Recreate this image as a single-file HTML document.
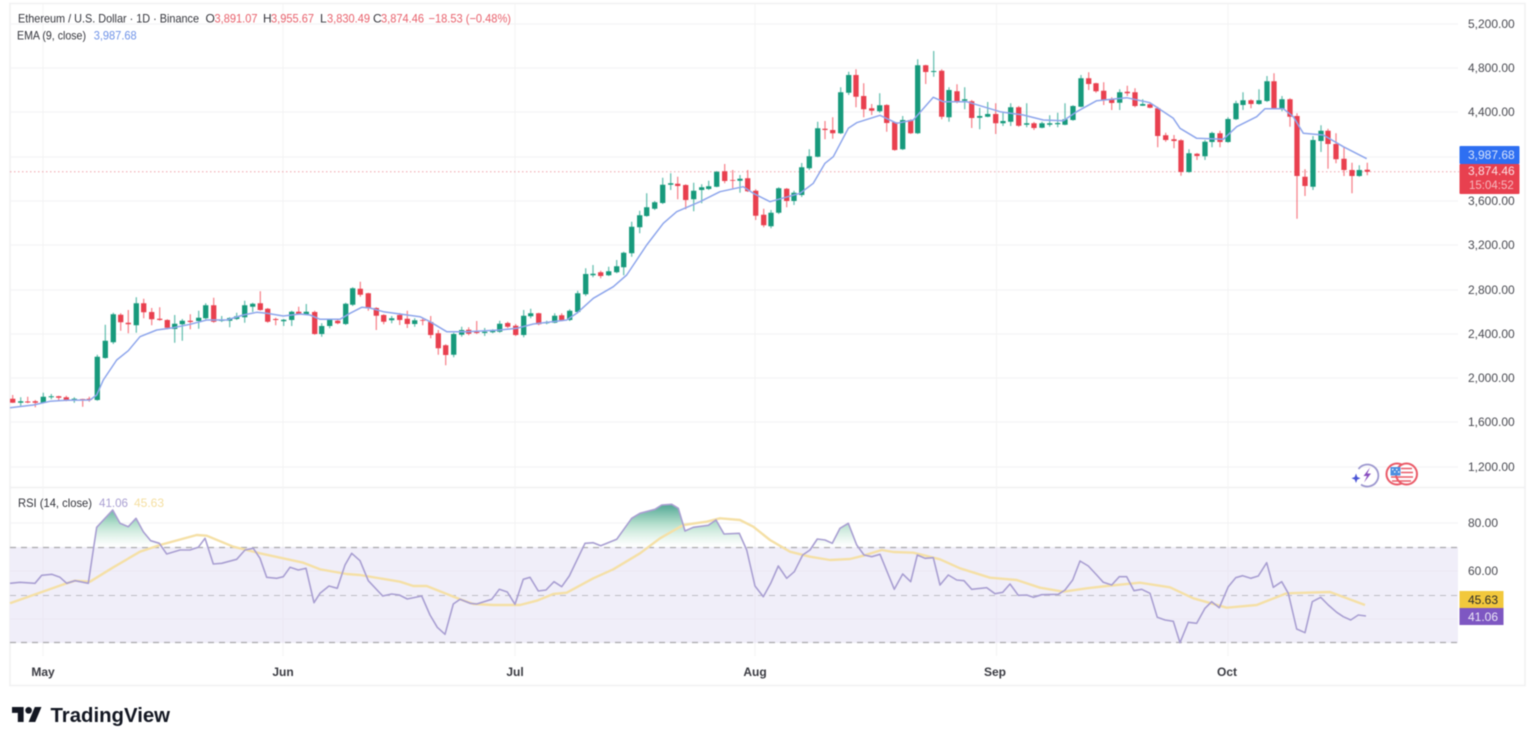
<!DOCTYPE html>
<html lang="en">
<head>
<meta charset="utf-8">
<title>ETH/USD chart</title>
<style>
html,body{margin:0;padding:0;background:#fff;width:1534px;height:744px;overflow:hidden}
svg{display:block;filter:blur(.4px);font-family:"Liberation Sans",sans-serif}
</style>
</head>
<body>
<svg width="1534" height="744" viewBox="0 0 1534 744" xmlns="http://www.w3.org/2000/svg">
<defs>
<linearGradient id="ob" gradientUnits="userSpaceOnUse" x1="0" y1="505" x2="0" y2="547">
<stop offset="0" stop-color="#55a997"/>
<stop offset=".45" stop-color="#b5e0cd"/>
<stop offset="1" stop-color="#ffffff" stop-opacity=".6"/>
</linearGradient>
</defs>
<rect width="1534" height="744" fill="#fff"/>
<!-- frame -->
<path d="M10 3.5H1525V685.5H10Z" fill="none" stroke="#f1f1f2" stroke-width="1.6"/>
<path d="M10 487.5H1525" stroke="#f0f0f1" stroke-width="1.4"/>
<!-- grid -->
<path d="M10 24H1458M10 68H1458M10 112H1458M10 157H1458M10 201H1458M10 245H1458M10 290H1458M10 334H1458M10 378H1458M10 422H1458M10 467H1458M10 523H1458" stroke="#f4f4f5" stroke-width="1.2" fill="none"/>
<path d="M43 4V656M283 4V656M515 4V656M755 4V656M996.500 4V656M1228 4V656" stroke="#f4f4f5" stroke-width="1.2" fill="none"/>
<!-- RSI band -->
<rect x="10" y="547" width="1448" height="96" fill="#f0eef9"/>
<path d="M10 571H1458M10 619H1458" stroke="#ebe8f4" stroke-width="1"/>
<path d="M43 547V643M283 547V643M515 547V643M755 547V643M996.500 547V643M1228 547V643" stroke="#ebe8f4" stroke-width="1"/>
<path d="M10 547.500H1458M10 642.500H1458" stroke="#a9a9ac" stroke-width="1.3" stroke-dasharray="6 5" fill="none"/>
<path d="M10 595.500H1458" stroke="#bdbcc4" stroke-width="1" stroke-dasharray="6 5" fill="none"/>
<!-- overbought fills -->
<path fill="url(#ob)" d="M94 547L96.700 527.300L112.700 510L120 523.300L128.300 526.700L136 518.300L143.300 531.700L150.700 540.700L159.300 543.300L161.500 547Z"/>
<path fill="url(#ob)" d="M583 547L585 543.300L593.300 542.700L600.700 545.700L616.700 539.300L631.700 518.300L640 513.300L655 509.300L661.700 505L671.700 504.300L678.300 508.300L685 531L693.300 527.300L708.300 525.300L716 520L724 534L739.300 533.300L745.400 547Z"/>
<path fill="url(#ob)" d="M808.700 547L810 550L817.300 539L825 540L832.300 543.300L840 528.300L848.300 523.300L856.700 545L857.500 547Z"/>
<!-- last price dotted line -->
<path d="M10 171.700H1459" stroke="#f0a2a9" stroke-width="1" stroke-dasharray="1.500 2.500" fill="none"/>
<!-- wicks -->
<g fill="none" stroke-width="1.300" stroke-opacity=".6">
<path stroke="#089981" d="M20.700 397.300V406.700M43.300 392.700V403.300M51.300 394V399.300M74.300 397.300V402.700M97.300 354.700V400.700M105.300 324.700V358.700M113.300 312.700V344M136.300 297.300V332.700M174.700 315V342.700M182.300 319V340.700M198.700 310.700V328.700M205.700 303.300V319.300M221.700 316V322M229.700 317.300V327.300M236.700 312.700V320M244.700 300.700V322.700M252.700 302.700V312M283.700 319V326M291.700 310.700V326M306.300 304V315M321.700 323.300V336.700M329.700 318.700V328.300M345.700 302.700V325M352.700 287.300V306M391.700 316V323.300M414.700 318.300V326.700M453.700 332.700V357.300M461.700 326.700V336.700M484.700 328V336M492.700 329.300V333.300M499.700 320.700V332.700M523.700 310V337.300M530.700 308.700V318.300M546.700 320.700V324.300M554.700 313.300V323.300M569.700 309.300V321M577.700 290.700V313.300M585.700 268.300V296M593 265V277.300M608.700 266.700V276M616.700 260V273.300M623.700 251.700V275.300M631.700 221.700V256.700M639.700 210.700V233.300M646.700 193.300V216.700M654.700 201V210M662.700 177.700V204M670.700 173.300V190M693.700 182.700V211.300M701.700 184.300V203.300M708.700 180.700V190M716.700 171V187.300M740 175V192.700M771 210V228.300M778.700 187.300V214M794 190.700V205M801.700 163V197M809.300 149.300V170M817.700 121.700V157.300M840.700 87.300V134M848.700 71.700V95M879.700 93.300V112.700M902.700 116V150M917.700 59.300V134M933.700 51V76.700M949 87.300V121.700M964.700 87.300V109.300M979.700 107.700V129.300M987.700 102V117.300M1003 112.700V126M1010.700 103.300V126M1026.700 103.300V127.300M1042 121.700V128.300M1049.700 115.300V126.700M1057.700 112.700V127.300M1065 103.300V125.300M1073 105.300V120.700M1081 75V107.300M1119.700 89.300V110M1142.700 99.300V106M1189 149.300V172.700M1205 140V160M1212 131.700V147.300M1228 117.300V142.700M1236 100.700V120M1243 92.300V110M1259 89.300V104.700M1267 76V102M1282 96V111.300M1313 136V190M1321 125.300V152M1359.300 165.300V176.700"/>
<path stroke="#f23645" d="M12.700 395V403M27.700 396.700V403.300M35.300 400V407.300M58.700 395.700V400M66.300 395.700V401.300M82.700 398.700V406.700M89.300 396.700V401.700M120.700 313.300V330.700M128.300 310V333.300M143.700 298.700V318.300M151.700 308V325.300M159.700 307.300V320.700M167.300 319.300V329.300M190.300 314.300V329.300M213.700 297.700V322.700M260.300 291.300V310.700M267.700 308V322.700M275.700 317.700V325.300M298.700 306.700V315M314.700 310.700V334.700M337.700 320V324.300M360.300 281.700V296.700M368.300 292.700V310.700M376.300 307.300V330M383.700 314.300V324.300M399.700 313V325M407.300 310.700V328M422.700 318.300V325.300M430.700 316V338.300M438.300 330V354.700M445.700 344.300V365.300M468.700 327.300V335.300M476.700 321V334M507.700 321.700V328M515.700 324V336M538.700 312.700V325.300M561.700 313.300V321.300M600.700 270.700V278.300M677.700 176.700V199.300M685.700 184.300V209.300M724.700 164V183.300M732.700 170V188.300M747.700 170V192M755.700 189.300V220M763.700 208.700V227.300M786.700 188V207.300M825 121V139.300M832.700 117.300V138.700M856 69.300V107.300M863.700 83.300V117.300M871.700 104V115M886.700 104.300V131.700M894.700 121.700V150.700M910.700 119.300V134M925.700 64.700V84M941.700 69.300V119.300M957 84.300V103.300M971.700 100V128M995.700 103.300V134M1018.700 106V126.700M1034 122V130M1088.700 72.300V90M1096 82.700V92.700M1103.700 82.300V105M1111.700 97.300V110M1127.300 85.700V96M1135 88.300V107.300M1150 103.300V108.300M1157.700 106.700V147.300M1165.700 132.700V141.700M1174 135V148.300M1181 139.300V175.700M1197 153V160M1220 130.700V147.300M1251 99.300V108.300M1274 73.300V109.300M1290 98.300V126.700M1297 113.300V218.700M1305 169.300V196M1328 128.700V168.700M1336 133.300V163.300M1344 146.700V176M1352 162.700V193.300M1367.300 162.700V175.300"/>
</g>
<!-- bodies -->
<g fill="none" stroke-width="5.300">
<path stroke="#179a7c" d="M20.700 401.300V402.700M43.300 396.700V402.700M51.300 396.300V397.300M74.300 398.700V400.300M97.300 356.700V400M105.300 340.700V358M113.300 314.300V342.300M136.300 303.300V325.300M174.700 323.700V329M182.300 320.700V324.300M198.700 317.700V321M205.700 305.300V318.300M221.700 320V321M229.700 318V320.700M236.700 316.300V319M244.700 305.300V317.300M252.700 303.700V306.700M283.700 319.700V321.300M291.700 311.700V320M306.300 311.700V314.300M321.700 326V334M329.700 320V326M345.700 303.700V324M352.700 288.300V304.700M391.700 318.300V320.300M414.700 320.300V324M453.700 334V354.700M461.700 330V334.700M484.700 331.700V333M492.700 330.700V332.300M499.700 323.700V331.700M523.700 315.700V335M530.700 313.300V316.300M546.700 322V323.300M554.700 315.700V322.700M569.700 310.700V320M577.700 293.300V312M585.700 274V294.300M593 273.700V275.300M608.700 271.300V275.300M616.700 266.300V272.300M623.700 252.700V267.300M631.700 226.700V253.300M639.700 215.300V227.300M646.700 207.300V216M654.700 202.300V208.700M662.700 184.700V203M670.700 183.300V184.700M693.700 190.700V199.300M701.700 187.300V190M708.700 186.300V189M716.700 171.700V186.700M740 178.700V180.700M771 212.700V226.300M778.700 188.300V212.700M794 192.700V201M801.700 167.300V195M809.300 156.300V168.300M817.700 128.300V156.700M840.700 92.300V133.300M848.700 75V92.700M879.700 105.300V111.300M902.700 120V149.300M917.700 65.300V133.300M933.700 71V72M949 90V117.300M964.700 99.300V100.700M979.700 116V117.700M987.700 114V116.700M1003 121V123.300M1010.700 107.300V121.700M1026.700 123.300V124.700M1042 123.300V127.700M1049.700 123.300V124.700M1057.700 123V124.300M1065 119.300V124.700M1073 106V120M1081 78.300V106.700M1119.700 92.300V102.700M1142.700 104V105.700M1189 153.300V172M1205 141.700V156.300M1212 133V142M1228 119V142M1236 103.300V119.300M1243 100.300V105M1259 100.300V104M1267 81.300V101M1282 99.300V108.700M1313 140V186.700M1321 130.700V141M1359.300 170V176"/>
<path stroke="#e9404f" d="M12.700 398.700V402.700M27.700 401.500V402.500M35.300 401.300V402.700M58.700 396.300V397.700M66.300 397.300V400.700M82.700 399V400M89.300 398.700V400M120.700 314.700V322.300M128.300 322.700V324.300M143.700 303.300V312.300M151.700 312V319.300M159.700 318.700V320M167.300 320V327.700M190.300 320.700V322M213.700 305.300V321.700M260.300 303.300V310M267.700 308.700V321.700M275.700 319V320M298.700 311.700V314.300M314.700 312V334M337.700 320.700V323.300M360.300 288.700V294.700M368.300 293.300V308.300M376.300 308V315.700M383.700 315V321.700M399.700 315V320M407.300 318.700V324M422.700 320V320.700M430.700 322V335M438.300 333.300V348.300M445.700 345.300V355M468.700 329.700V333.700M476.700 332V333M507.700 323V326.700M515.700 325.700V335M538.700 313.300V324.300M561.700 315.300V320M600.700 272.300V276M677.700 183.700V186M685.700 185V200M724.700 171.300V181M732.700 180V180.700M747.700 178.300V191.300M755.700 190.700V215.700M763.700 214.700V225.300M786.700 188.700V201M825 128.700V130M832.700 130V133.300M856 75V96.700M863.700 96V109.300M871.700 108.300V110.700M886.700 105V123M894.700 122.300V150M910.700 120V133.300M925.700 65.300V72M941.700 70.700V116.700M957 91.300V102M971.700 101.300V118M995.700 114V123.300M1018.700 107.300V125.700M1034 123.300V128M1088.700 78.300V84M1096 83.300V91.300M1103.700 90.700V100M1111.700 99.300V103M1127.300 91.700V93.300M1135 92.300V106M1150 104.300V107.700M1157.700 108.300V136M1165.700 135.300V140M1174 139.300V141M1181 140.300V172M1197 153.700V156M1220 133.300V142M1251 100.300V104M1274 81.300V108.700M1290 99.300V116.700M1297 116V176M1305 176.700V186M1328 130.700V144M1336 144V159.300M1344 158.700V170M1352 170V176M1367.300 169.700V171.700"/>
</g>
<!-- EMA -->
<polyline fill="none" stroke="#8ea6ec" stroke-width="1.500" stroke-linejoin="round" points="10,407.700 33.300,405 50,401.300 66.700,400.300 90,400 96.700,395 103.300,380 116.700,360 128.300,350.700 140,336.700 156.700,330 173.300,327.700 190,324.300 206.700,320 226.700,320 243.300,315 256.700,312.300 266.700,313.300 283.300,316 300,314 310,315 320,319.300 340,319.300 350,313.300 361.700,307.300 370,308 383.300,311.700 400,314 420,316.700 430,321.700 446.700,331.700 466.700,331.700 500,330 516.700,328.300 533.300,324 566.700,320 576.700,313.300 593.300,298.300 613.300,286.700 626.700,275 646.700,245 663.300,223.300 676.700,211.700 700,201.700 720,191.700 743.300,186.700 753.300,193.300 770,201.700 800,193.300 813.300,183.300 825,163.300 833.300,156.700 848.300,128.300 856.700,122.700 880,115.300 896.700,123.300 913.300,120 933.300,97.300 943.300,101.700 966.700,101.700 1000,111.700 1023.300,115 1043.300,120 1063.300,120.700 1076.700,111.700 1096.700,100.700 1126.700,97.700 1150,102.700 1173.300,118.300 1180,128.300 1196.700,138.300 1223.300,139.300 1236.700,126.700 1256.700,116.700 1265,108.700 1283.300,108.700 1293.300,116.700 1303.300,133.300 1323.300,135 1343.300,146.700 1366.700,158.700"/>
<!-- RSI MA -->
<polyline fill="none" stroke="#f5e0a6" stroke-width="2.400" stroke-linejoin="round" points="10,603.300 33.300,595 66.700,583.300 75,580.700 90,581.700 113.300,567.300 140,551.700 160,545 196.700,535 206.700,535.700 233.300,546.700 260,553.300 303.300,562.700 320,569.300 346.700,574 360,575 400,581.700 413.300,586 426.700,586 460,599.300 473.300,604 493.300,605 520,605 536.700,600.700 553.300,594 566.700,592.700 593.300,578.300 613.300,569.300 640,553.300 660,538.300 683.300,525 706.700,521.700 720,518.300 740,520 753.300,526.700 770,540 790,551.700 810,556.700 830,560 850,559 863.300,555.700 881.700,550 893.300,552 913.300,552.700 940,559.300 960,568.300 990,577.700 1016.700,580 1040,587.700 1063.300,591.700 1086.700,588.300 1106.700,586 1140,582.700 1170,587.300 1193.300,598.300 1226.700,607.700 1256.700,605 1286.700,593.300 1330,592 1365,605"/>
<!-- RSI -->
<polyline fill="none" stroke="#a99fd2" stroke-width="1.600" stroke-linejoin="round" points="10,583.300 20,582.300 35,583.300 41.700,575.300 51.700,574.300 60,577.300 66.700,583.300 75,580.700 88.300,583.300 96.700,527.300 112.700,510 120,523.300 128.300,526.700 136,518.300 143.300,531.700 150.700,540.700 159.300,543.300 166.700,554 180,550 190,550 198.300,547.300 205,538.300 213.300,564 221.700,563.300 236.700,559.300 245,550 253.300,548.300 260,558.300 266.700,577.300 276.700,578.300 283.300,576.700 290,567.300 298.300,570 306,568.300 314,602.700 320,593.300 329,586 337.300,588.300 345,565 351.700,553.300 360,560.700 368.300,580.700 382.700,596 391.700,594 399.300,595 407.300,599 421.700,596 430,615 437.300,627.300 445,634.300 453.300,604 460,599.300 470,603.300 476.700,604 491.700,599.300 499.300,589.300 507.300,592 515,604.300 523.300,579.300 530,577.300 538.300,591 546,590 554,581.700 561.700,586.700 569.300,576 585,543.300 593.300,542.700 600.700,545.700 616.700,539.300 631.700,518.300 640,513.300 655,509.300 661.700,505 671.700,504.300 678.300,508.300 685,531 693.300,527.300 708.300,525.300 716,520 724,534 739.300,533.300 746.700,550 755,586 763.300,596.700 770.700,583.300 778.300,566 786.700,578.300 794.300,571.700 802.700,555 810,550 817.300,539 825,540 832.300,543.300 840,528.300 848.300,523.300 856.700,545 864,555 871.700,556.700 880,554.300 894.300,589.300 902.700,574 910.700,581.700 917.300,555 925,558.300 933.300,557.700 940,585 948.300,575 956.700,580 964,580.700 971.700,589.300 986.700,587.700 995,593.700 1002.700,592.300 1010,584 1018.300,595.300 1026.700,595 1033.300,597.300 1041.700,594.700 1058.300,594.300 1065,590 1072.700,580 1080,561 1088.300,566 1096.700,575 1103.300,582.300 1111.700,585 1119.300,576.700 1126.700,576.700 1134,590.700 1141.700,589.300 1150,593.300 1157.300,617.300 1165,620 1173.300,621.300 1180,642.700 1188.300,622.300 1196.700,623.300 1205,608.300 1211.700,601.700 1219.300,607.700 1228.300,586.700 1235.700,577.700 1242.700,575.700 1250.700,578.300 1258.300,576 1266.700,562.700 1273.300,587.300 1281.700,581.700 1288.300,593.300 1296.700,629 1305,632.700 1312.300,601.700 1320.700,597.300 1328.300,605 1336.700,612.300 1343.300,616.700 1350.700,620 1358.300,615 1366,616"/>
<!-- legend -->
<g font-size="12" fill="#33343b">
<text x="18" y="22.500" textLength="181" lengthAdjust="spacingAndGlyphs">Ethereum / U.S. Dollar · 1D · Binance</text>
<text x="205.500" y="22.500">O</text><text x="214.500" y="22.500" fill="#e8606b" textLength="43" lengthAdjust="spacingAndGlyphs">3,891.07</text>
<text x="263" y="22.500">H</text><text x="271" y="22.500" fill="#e8606b" textLength="43" lengthAdjust="spacingAndGlyphs">3,955.67</text>
<text x="320" y="22.500">L</text><text x="327" y="22.500" fill="#e8606b" textLength="43" lengthAdjust="spacingAndGlyphs">3,830.49</text>
<text x="373" y="22.500">C</text><text x="381" y="22.500" fill="#e8606b" textLength="43" lengthAdjust="spacingAndGlyphs">3,874.46</text>
<text x="428.500" y="22.500" fill="#e8606b" textLength="82.500" lengthAdjust="spacingAndGlyphs">−18.53 (−0.48%)</text>
<text x="17" y="39.500" textLength="69" lengthAdjust="spacingAndGlyphs">EMA (9, close)</text>
<text x="93.700" y="39.500" fill="#6f93e8" textLength="43" lengthAdjust="spacingAndGlyphs">3,987.68</text>
<text x="18" y="507" textLength="74" lengthAdjust="spacingAndGlyphs">RSI (14, close)</text>
<text x="99" y="507" fill="#a99fd2" textLength="29" lengthAdjust="spacingAndGlyphs">41.06</text>
<text x="134" y="507" fill="#f5dfa0" textLength="30" lengthAdjust="spacingAndGlyphs">45.63</text>
</g>
<!-- price axis -->
<g font-size="12" fill="#4a4b52">
<text x="1468" y="28">5,200.00</text>
<text x="1468" y="72">4,800.00</text>
<text x="1468" y="116">4,400.00</text>
<text x="1468" y="205">3,600.00</text>
<text x="1468" y="249">3,200.00</text>
<text x="1468" y="294">2,800.00</text>
<text x="1468" y="338">2,400.00</text>
<text x="1468" y="382">2,000.00</text>
<text x="1468" y="426">1,600.00</text>
<text x="1468" y="471">1,200.00</text>
<text x="1468" y="527">80.00</text>
<text x="1468" y="575">60.00</text>
</g>
<!-- price tags -->
<rect x="1459.500" y="146" width="60" height="18" fill="#2e6ff2" rx="1"/>
<rect x="1459.500" y="164" width="60" height="30" fill="#e8404f" rx="1"/>
<g font-size="12">
<text x="1468" y="159" fill="#d6e2fb">3,987.68</text>
<text x="1468" y="175" fill="#fbdde0">3,874.46</text>
<text x="1469" y="189" fill="#f6b9be" font-size="11.500">15:04:52</text>
</g>
<rect x="1459.500" y="591" width="44" height="17" fill="#f2c83c"/>
<rect x="1459.500" y="608" width="44" height="17" fill="#7e57c2"/>
<text x="1468" y="604" font-size="12" fill="#2b2b2b">45.63</text>
<text x="1468" y="621" font-size="12" fill="#ebe6f7">41.06</text>
<!-- time axis -->
<g font-size="12" font-weight="700" fill="#3a3b42" text-anchor="middle">
<text x="43" y="676">May</text>
<text x="283" y="676">Jun</text>
<text x="515" y="676">Jul</text>
<text x="755" y="676">Aug</text>
<text x="995" y="676">Sep</text>
<text x="1227" y="676">Oct</text>
</g>
<!-- badge icons -->
<path d="M1358.500 469A11 11 0 1 1 1361 484.500" fill="none" stroke="#9d98cf" stroke-width="1.800"/>
<path d="M1356 473.500L1357.300 477L1360.500 478.300L1357.300 479.600L1356 483L1354.700 479.600L1351.500 478.300L1354.700 477Z" fill="#4a55d6"/>
<path d="M1370 467.500L1363.500 476H1367L1364 482.500L1371 473.500H1367.300Z" fill="#8a4fc0"/>
<circle cx="1397" cy="474" r="10.500" fill="#fff" stroke="#ea5a68" stroke-width="2"/>
<circle cx="1406.500" cy="474" r="10.500" fill="#fff" stroke="#ea5a68" stroke-width="2"/>
<path d="M1401 468.500H1412M1401 472.500H1413M1391 477H1413M1392 481H1411" stroke="#ea5a68" stroke-width="1.600"/>
<rect x="1390.500" y="467" width="10" height="8.500" fill="#4d8fe0"/>
<path d="M1392 469.500h1.500M1396 469.500h1.500M1394 472h1.500M1398 472h1.500" stroke="#fff" stroke-width="1.200"/>
<!-- logo -->
<g transform="translate(12 703.700) scale(.83)" fill="#131722">
<path d="M14 22H7V11H0V4h14v18zM28 22h-8l7.500-18h8L28 22z"/>
<circle cx="20" cy="8" r="4"/>
</g>
<text x="50.500" y="722" font-size="20" font-weight="700" fill="#131722" textLength="119.500" lengthAdjust="spacingAndGlyphs">TradingView</text>
</svg>
</body>
</html>
